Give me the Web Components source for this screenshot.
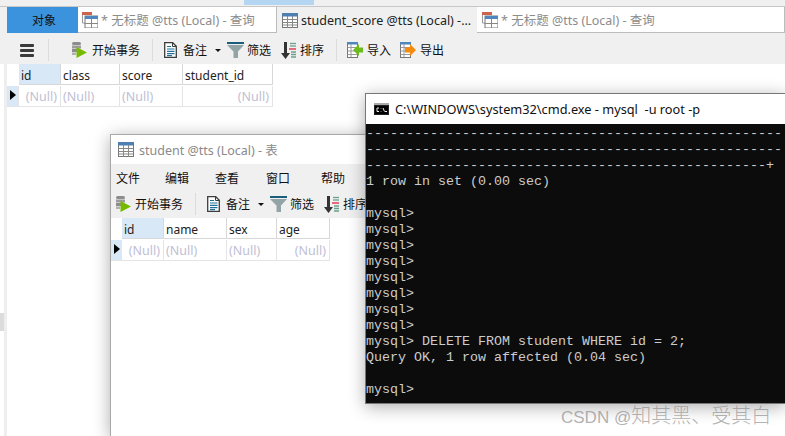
<!DOCTYPE html>
<html lang="zh"><head><meta charset="utf-8"><title>Navicat</title>
<style>
html,body{margin:0;height:100%;background:#fff;overflow:hidden}
body{font:12px "Noto Sans","Noto Sans CJK SC",sans-serif;color:#111;width:785px;height:436px;position:relative}
</style></head><body>
<main-app>
  <tab-bar slot="tabs">
    <app-tab kind="object" w="71">对象</app-tab>
    <app-tab kind="query" w="199">* 无标题 @tts (Local) - 查询</app-tab>
    <app-tab kind="active" w="200">student_score @tts (Local) -...</app-tab>
    <app-tab kind="query" style="flex:1;padding-left:5px">* 无标题 @tts (Local) - 查询</app-tab>
  </tab-bar>
  <tool-bar slot="tools" style="--pl:13px;height:31px;padding-top:3px">
    <tool-btn icon="menu" style="margin-right:14px"></tool-btn>
    <tool-sep style="margin-right:22px"></tool-sep>
    <tool-btn icon="begin" gap="5" style="margin-right:12px">开始事务</tool-btn>
    <tool-sep style="margin-right:11px"></tool-sep>
    <tool-btn icon="note" gap="6" style="margin-right:8px">备注</tool-btn>
    <tool-btn icon="caret" style="margin-right:6px"></tool-btn>
    <tool-btn icon="filter" gap="3" style="margin-right:10px">筛选</tool-btn>
    <tool-btn icon="sort" style="margin-right:12px">排序</tool-btn>
    <tool-sep style="margin-right:10px"></tool-sep>
    <tool-btn icon="import" style="margin-right:9px">导入</tool-btn>
    <tool-btn icon="export">导出</tool-btn>
  </tool-bar>
  <data-grid slot="grid" cols="id:42,class:59,score:63,student_id:90" style="--ind:12px"></data-grid>
</main-app>

<app-window style="left:110px;top:134px;width:675px;height:302px;border-bottom:0">
  <win-title icon="table" style="color:#8a8a8a;height:29px;padding-left:7px;gap:5px">student @tts (Local) - 表</win-title>
  <menu-bar><span style="width:49px">文件</span><span style="width:50px">编辑</span><span style="width:51px">查看</span><span style="width:55px">窗口</span><span>帮助</span></menu-bar>
  <tool-bar style="--pl:4px;height:28px">
    <tool-btn icon="begin" style="margin-right:12px">开始事务</tool-btn>
    <tool-sep style="margin-right:11px"></tool-sep>
    <tool-btn icon="note" gap="6" style="margin-right:8px">备注</tool-btn>
    <tool-btn icon="caret" style="margin-right:6px"></tool-btn>
    <tool-btn icon="filter" gap="3" style="margin-right:10px">筛选</tool-btn>
    <tool-btn icon="sort">排序</tool-btn>
  </tool-bar>
  <data-grid cols="id:42,name:63,sex:50,age:53" style="--ind:11px"></data-grid>
</app-window>

<app-window dark style="left:365px;top:93px;width:420px;height:311px">
  <win-title icon="cmd" style="color:#111;height:30px;padding-left:8px;gap:6px;font-size:12.75px">C:\WINDOWS\system32\cmd.exe - mysql&nbsp; -u root -p</win-title>
  <cmd-console></cmd-console>
</app-window>

<water-mark><span style="font-size:17px">CSDN @</span>知其黑、受其白</water-mark>

<script>
const ICONS={
menu:`<svg width="14" height="13" viewBox="0 0 14 13"><g fill="#3a3a3a"><rect width="14" height="3" rx="1"/><rect y="5" width="14" height="3" rx="1"/><rect y="10" width="14" height="3" rx="1"/></g></svg>`,
begin:`<svg width="16" height="16" viewBox="0 0 16 16"><rect x="1" y="0" width="9" height="3" rx="1.5" fill="#8d8d8d"/><rect x="1" y="3.5" width="9" height="3" fill="#9c9c9c"/><rect x="1" y="7" width="5" height="3" fill="#8d8d8d"/><rect x="1" y="10.5" width="4" height="2.5" fill="#b0b0b0"/><path d="M5.5 5 16 10.5 5.5 16z" fill="#76b900"/></svg>`,
note:`<svg width="13" height="16" viewBox="0 0 13 16"><path d="M.7.7h8l3.6 3.6v11H.7z" fill="#fff" stroke="#3c3c3c" stroke-width="1.3"/><path d="M8.5 1v3.5H12" fill="none" stroke="#3c3c3c"/><g stroke="#1f6f9b" stroke-width="1.2"><path d="M3 4.5h4M3 7h7.5M3 9.3h7.5M3 11.6h7.5M3 13.700h5"/></g></svg>`,
caret:`<svg width="6" height="3" viewBox="0 0 6 3"><path d="M0 0h6L3 3z" fill="#111"/></svg>`,
filter:`<svg width="17" height="16" viewBox="0 0 17 16"><rect width="17" height="2" fill="#1b5e7c"/><path d="M0 3h17l-6 6.5V16H6.500V9.500z" fill="#93a4a6"/></svg>`,
sort:`<svg width="15" height="17" viewBox="0 0 15 17"><path d="M3 0h3v11h3l-4.500 6L0 11h3z" fill="#333"/><g stroke-width="1.300"><path d="M9 1.500h6" stroke="#6aa08c"/><path d="M9 4h6" stroke="#6aa08c"/><path d="M8 7h7" stroke="#e0203c"/><path d="M10 10h5M10 12.500h5M10 15h5" stroke="#6aa08c"/></g></svg>`,
import:`<svg width="16" height="16" viewBox="0 0 16 16"><rect x=".5" y=".5" width="10" height="15" fill="#fff" stroke="#777"/><rect x="0" y="0" width="11" height="2.500" fill="#4d87bd"/><path d="M.5 5.500h10M.5 9h10M.5 12.500h10M4 2v13" stroke="#999" fill="none"/><path d="M16 5.500h-4V2L6 8l6 6v-3.500h4z" fill="#6cbb1d"/></svg>`,
export:`<svg width="16" height="16" viewBox="0 0 16 16"><rect x=".5" y=".5" width="10" height="15" fill="#fff" stroke="#777"/><rect x="0" y="0" width="11" height="2.500" fill="#4d87bd"/><path d="M.5 5.500h10M.5 9h10M.5 12.500h10M4 2v13" stroke="#999" fill="none"/><path d="M5 5.500h5V2l6 6-6 6v-3.500H5z" fill="#f58a0b"/></svg>`,
table:`<svg width="16" height="15" viewBox="0 0 16 15"><rect x=".5" y=".5" width="15" height="14" fill="#fff" stroke="#777"/><rect width="16" height="3.500" fill="#4d7fb0"/><path d="M.5 6.500h15M.5 9.500h15M.5 12h15M5.500 3v12M10.500 3v12" stroke="#888" fill="none"/></svg>`,
query:`<svg width="16" height="16" viewBox="0 0 16 16"><rect x="0" y="0" width="10" height="3" fill="#c9654f"/><path d="M.5 3v8h3" fill="none" stroke="#999"/><rect x="3" y="4" width="13" height="12" fill="#fff" stroke="#777" stroke-width="1"/><rect x="3" y="4" width="13" height="3" fill="#4d87bd"/><path d="M3 11.500h13M9.500 7v9" stroke="#888"/></svg>`,
cmd:`<svg width="15" height="12" viewBox="0 0 15 12"><rect width="15" height="12" fill="#222"/><rect y="0" width="15" height="2" fill="#aaa"/><rect x="1" y="3" width="13" height="8" fill="#000"/><path d="M5 5H3v3.500h2M7 5.500v.5M7 8v.500M9 5l1.500 3.500M11 8.500h2" stroke="#eee" fill="none"/></svg>`};
const def=(n,css,html,extra={})=>{
  customElements.define(n,class extends HTMLElement{
    constructor(){super();this.attachShadow({mode:'open'}).innerHTML=`<style>${css}</style>${html}`}
    connectedCallback(){extra.init&&extra.init.call(this)}
  })};

def('main-app',`:host{display:grid;position:absolute;inset:0;grid-template-rows:6px auto auto 1fr;background:#fff}
.top{background:#f0f0f0;position:relative}
.sel{position:absolute;left:244px;width:70px;top:0;height:5px;background:#b5d6f2}
.row{display:flex;background:#f0f0f0;border-top:1px solid #c8c8c8}
.tools{background:#f0f0f0;padding-left:7px;}
.body{display:flex}
.rail{width:4px;background:#fff;position:relative}
.rail i{position:absolute;top:249px;left:0;width:4px;height:18px;background:#dcdcdc}
.split{width:3px;background:#eee}
.grid{flex:1}`,
`<div class="top"><span class="sel"></span></div>
<div class="row"><div style="width:7px"></div><div style="flex:1"><slot name="tabs"></slot></div></div>
<div class="tools"><slot name="tools"></slot></div>
<div class="body"><div class="rail"><i></i></div><div class="split"></div><div class="grid"><slot name="grid"></slot></div></div>`);

def('tab-bar',`:host{display:flex;height:26px}`,`<slot></slot>`);
def('app-tab',`:host{display:flex;align-items:center;box-sizing:border-box;font-size:12.5px;white-space:nowrap;overflow:hidden}
:host([kind=object]){background:#3b93dd;color:#111;justify-content:center;font-size:12px}
:host([kind=query]){background:#fff;color:#8c8c8c;border-right:1px solid #bcbcbc;border-bottom:1px solid #bcbcbc;padding-left:4px}
:host([kind=active]){background:#f0f0f0;color:#222;padding-left:5px}
#i{display:flex;margin-right:3px}`,`<span id="i"></span><slot></slot>`,{init(){
  const k=this.getAttribute('kind');if(this.hasAttribute('w'))this.style.width=this.getAttribute('w')+'px';
  this.shadowRoot.getElementById('i').innerHTML=k=='query'?ICONS.query:k=='active'?ICONS.table:'';
}});
def('tool-bar',`:host{display:flex;align-items:center;background:#f0f0f0;padding-left:var(--pl);box-sizing:border-box;white-space:nowrap;overflow:hidden;flex:none}`,`<slot></slot>`);
def('tool-sep',`:host{display:block;width:1px;height:22px;background:#dcdcdc;flex:none}`,``);
def('tool-btn',`:host{display:flex;align-items:center;gap:4px;font-size:12px;color:#111;flex:none}#i{display:flex}`,`<span id="i"></span><slot></slot>`,{init(){
  this.shadowRoot.getElementById('i').innerHTML=ICONS[this.getAttribute('icon')]||'';
  if(this.hasAttribute('gap'))this.style.gap=this.getAttribute('gap')+'px';
}});
def('menu-bar',`:host{display:flex;height:26px;padding-top:1px;box-sizing:border-box;align-items:center;background:#f0f0f0;padding-left:5px;font-size:12px;color:#111;flex:none}
::slotted(span){flex:none;display:block}`,`<slot></slot>`);
def('app-window',`:host{position:absolute;display:flex;flex-direction:column;box-sizing:border-box;background:#fff;border:1px solid #a8a8a8;border-right:0;box-shadow:0 3px 16px rgba(0,0,0,.32)}
:host([dark]){border-color:#777;background:#0c0c0c}`,`<slot></slot>`);
def('win-title',`:host{display:flex;align-items:center;gap:4px;background:#fff;font-size:12.5px;white-space:nowrap;flex:none;box-sizing:border-box}#i{display:flex}`,`<span id="i"></span><slot></slot>`,{init(){
  this.shadowRoot.getElementById('i').innerHTML=ICONS[this.getAttribute('icon')];
}});
def('data-grid',`:host{display:block;font-size:12.5px}
.r{display:flex;height:21px}
.c{box-sizing:border-box;height:21px;line-height:20px;padding:1px 2px 0;border-right:1px solid #e4e4e4;border-bottom:1px solid #e4e4e4;white-space:nowrap;overflow:hidden}
.h{color:#222;font-size:12px;border-right:1px solid #d8d8d8;border-bottom:1px solid #d8d8d8;padding-top:2px;line-height:19px}
.n{color:#c0c0d4;padding-left:2px}
.nr{text-align:right;padding-right:3px}
.ind{width:var(--ind);flex:none;padding:0;position:relative}
.mark{background:#d8e8f7}
.ind.mark::after{content:"";position:absolute;left:3px;top:4px;border-left:6px solid #000;border-top:5px solid transparent;border-bottom:5px solid transparent}
.sel{background:#d8e8f7}
.r2{margin-top:1px}`,`<div id="g"></div>`,{init(){
  const cols=this.getAttribute('cols').split(',').map(s=>s.split(':'));
  let h=`<div class="r"><div class="c ind" style="border:0"></div>`;
  cols.forEach(([n,w],i)=>h+=`<div class="c h ${i==0?'sel':''}" style="width:${w}px">${n}</div>`);
  h+=`</div><div class="r r2"><div class="c ind mark"></div>`;
  cols.forEach(([n,w],i)=>{const right=i==0||i==cols.length-1;h+=`<div class="c n ${right?'nr':''}" style="width:${w}px">(Null)</div>`});
  h+='</div>';this.shadowRoot.getElementById('g').innerHTML=h;
}});
const L=['-'.repeat(52),'-'.repeat(52),'-'.repeat(50)+'+','1 row in set (0.00 sec)','',...Array(8).fill('mysql>'),'mysql> DELETE FROM student WHERE id = 2;','Query OK, 1 row affected (0.04 sec)','','mysql>'];
def('cmd-console',`:host{display:block;flex:1;background:#0c0c0c;color:#ccc;font:13.34px/16px "Liberation Mono",monospace;white-space:pre;padding-top:2px}
div{height:16px}`,L.map(t=>`<div>${t.replace(/>/g,'&gt;')}</div>`).join(''));
def('water-mark',`:host{position:absolute;left:561px;top:404px;font:20px/24px "Liberation Sans","Noto Sans CJK SC",sans-serif;font-weight:300;color:rgba(130,130,130,.62);white-space:nowrap}`,`<slot></slot>`);
</script>
</body></html>
